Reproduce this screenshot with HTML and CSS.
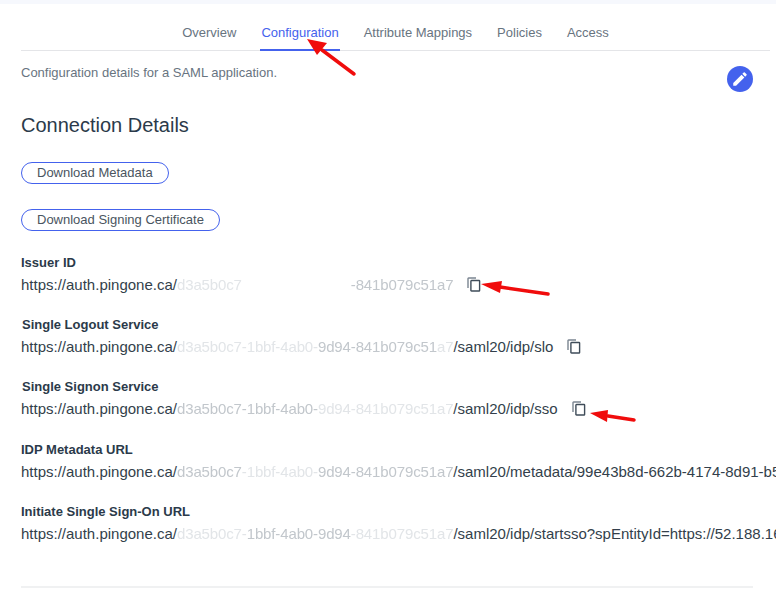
FILE: index.html
```html
<!DOCTYPE html>
<html lang="en">
<head>
<meta charset="utf-8">
<title>Configuration</title>
<link rel="stylesheet" href="styles.css">
</head>
<body>
<div class="strip"></div>
<main class="page">
  <nav class="tabs">
    <a class="tab">Overview</a>
    <a class="tab active">Configuration</a>
    <a class="tab">Attribute Mappings</a>
    <a class="tab">Policies</a>
    <a class="tab">Access</a>
  </nav>
  <div class="intro">
    <p class="desc">Configuration details for a SAML application.</p>
    <button class="edit" aria-label="Edit">
      <svg viewBox="0 0 24 24" width="18" height="18"><path fill="#fff" d="M3 17.25V21h3.75L17.81 9.94l-3.75-3.75L3 17.25zM20.71 7.04a1 1 0 0 0 0-1.41l-2.34-2.34a1 1 0 0 0-1.41 0l-1.83 1.83 3.75 3.75 1.83-1.83z"/></svg>
    </button>
  </div>
  <h2 class="title">Connection Details</h2>
  <div class="actions">
    <button class="pill">Download Metadata</button>
    <button class="pill">Download Signing Certificate</button>
  </div>
  <section class="fields">
    <div class="field">
      <div class="label">Issuer ID</div>
      <div class="value"><span>https://auth.pingone.ca/<span class="id"><span class="faint">d3a5b0c7</span><span class="gone">-1bbf-4ab0-9d94</span><span class="dim">-841b079c51a7</span></span></span>
        <svg class="copy" viewBox="0 0 14 15"><path class="back" d="M1 11V1.600Q1 1 1.600 1H9"/><path class="front" d="M4.500 3.500h7.500a.6.6 0 0 1 .6.600v9.300a.6.6 0 0 1-.6.600H4.500a.6.6 0 0 1-.6-.6V4.100a.6.6 0 0 1 .6-.6z"/></svg>
      </div>
    </div>
    <div class="field">
      <div class="label inset">Single Logout Service</div>
      <div class="value"><span>https://auth.pingone.ca/<span class="id"><span class="faint">d3a5b0c7-1bbf-4ab0-</span><span class="dim">9d94-841b079c51</span><span class="faint">a7</span></span>/saml20/idp/slo</span>
        <svg class="copy" viewBox="0 0 14 15"><path class="back" d="M1 11V1.600Q1 1 1.600 1H9"/><path class="front" d="M4.500 3.500h7.500a.6.6 0 0 1 .6.600v9.300a.6.6 0 0 1-.6.600H4.500a.6.6 0 0 1-.6-.6V4.100a.6.6 0 0 1 .6-.6z"/></svg>
      </div>
    </div>
    <div class="field">
      <div class="label inset">Single Signon Service</div>
      <div class="value"><span>https://auth.pingone.ca/<span class="id"><span class="dim">d3a5b0c7-1bbf-4ab0-</span><span class="faint">9d94-841b079c51a7</span></span>/saml20/idp/sso</span>
        <svg class="copy" viewBox="0 0 14 15"><path class="back" d="M1 11V1.600Q1 1 1.600 1H9"/><path class="front" d="M4.500 3.500h7.500a.6.6 0 0 1 .6.600v9.300a.6.6 0 0 1-.6.600H4.500a.6.6 0 0 1-.6-.6V4.100a.6.6 0 0 1 .6-.6z"/></svg>
      </div>
    </div>
    <div class="field">
      <div class="label">IDP Metadata URL</div>
      <div class="value"><span>https://auth.pingone.ca/<span class="id"><span class="dim">d3a5b0c7</span><span class="faint">-1bbf-4ab0-</span><span class="dim">9d94-841b079c51a7</span></span>/saml20/metadata/99e43b8d-662b-4174-8d91-b5</span></div>
    </div>
    <div class="field">
      <div class="label">Initiate Single Sign-On URL</div>
      <div class="value"><span>https://auth.pingone.ca/<span class="id"><span class="faint">d3a5b0c7-</span><span class="dim">1bbf-4ab0-9d94</span><span class="faint">-841b079c51a7</span></span>/saml20/idp/startsso?spEntityId=https://52.188.16</span></div>
    </div>
  </section>
  <hr class="rule">
</main>
<svg class="marks" viewBox="0 0 776 589" width="776" height="589" aria-hidden="true">
  <path class="shaft" d="M354 74 322 50"/>
  <path class="head" d="M307 39 327 43 317 55z"/>
  <path class="shaft" d="M548 294 500 287"/>
  <path class="head" d="M481 284 502 281 500 293z"/>
  <path class="shaft" d="M634 420 608 416"/>
  <path class="head" d="M590 413 608 410 607 422z"/>
</svg>
</body>
</html>
```
FILE: styles.css
```css
* { box-sizing: border-box; }
html, body { margin: 0; height: 589px; overflow: hidden; background: #fff; }
body { position: relative; font-family: "Liberation Sans", Arial, sans-serif; color: #2b3a4a; }
.strip { height: 4px; background: #f6f8fd; }
.page { width: 770px; padding-left: 21px; }
.tabs { display: flex; justify-content: center; gap: 23px; height: 47px; padding: 17px 0 0 0; border-bottom: 1px solid #e4e5e8; font-size: 13px; }
.tab { height: 30px; padding: 4px 1px 0; color: #68747f; line-height: 16px; }
.tab.active { color: #4462ed; border-bottom: 2px solid #4462ed; }
.intro { display: flex; justify-content: space-between; height: 52px; padding: 15px 17px 0 0; }
.desc { margin: 0; font-size: 13px; line-height: 14px; color: #68747f; }
.edit { display: flex; align-items: center; justify-content: center; width: 26px; height: 26px; padding: 0; border: 0; border-radius: 50%; background: #4462ed; }
.title { margin: 10px 0 0; font-size: 20px; font-weight: 400; line-height: 24px; color: #2b3a4a; }
.actions { display: flex; flex-direction: column; align-items: flex-start; gap: 25px; margin-top: 25px; }
.pill { height: 22px; padding: 0 15px; border: 1px solid #4462ed; border-radius: 11px; background: #fff; font: 13px/20px "Liberation Sans", Arial, sans-serif; color: #4a5560; }
.fields { margin-top: 24px; }
.field { height: 62.200px; }
.label { font-size: 13px; font-weight: 700; line-height: 15px; color: #2b3a4a; }
.label.inset { padding-left: 1px; }
.value { display: flex; align-items: center; gap: 14px; margin-top: 6px; font-size: 15px; line-height: 17px; color: #333f4b; white-space: nowrap; }
.id { letter-spacing: -.13px; }
.faint { color: #e2e5e8; filter: blur(.6px); }
.dim { color: #c2c7cc; filter: blur(.7px); }
.gone { color: #fff; }
.copy { flex: none; width: 14px; height: 15px; fill: none; stroke-width: 1.400; }
.back { stroke: #7b8591; }
.front { stroke: #3f4c59; }
.rule { width: 732px; height: 2px; margin: 20.500px 0 0; border: 0; background: #f0f1f2; }
.marks { position: absolute; left: 0; top: 0; pointer-events: none; }
.shaft { fill: none; stroke: #f00c0c; stroke-width: 3.500; stroke-linecap: round; }
.head { fill: #f00c0c; }
```
